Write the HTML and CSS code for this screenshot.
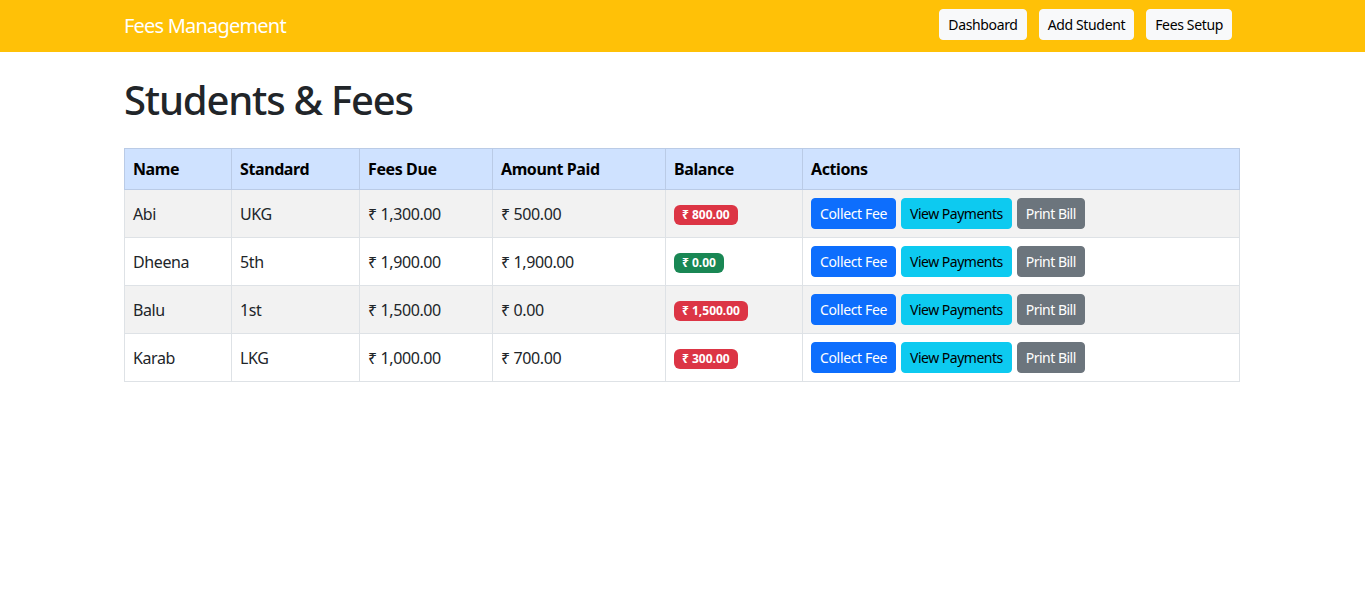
FILE: index.html
```html
<!DOCTYPE html>
<html lang="en">
<head>
<meta charset="utf-8">
<title>Fees Management</title>
<link rel="stylesheet" href="styles.css">
</head>
<body>
<nav class="navbar">
  <div class="nav-inner">
    <a class="brand" href="#">Fees Management</a>
    <div class="nav-links">
      <a class="btn btn-light" href="#">Dashboard</a>
      <a class="btn btn-light" href="#">Add Student</a>
      <a class="btn btn-light" href="#">Fees Setup</a>
    </div>
  </div>
</nav>
<main class="container">
  <h1 class="title">Students &amp; Fees</h1>
  <table class="table">
    <colgroup>
      <col class="c-name"><col class="c-std"><col class="c-due"><col class="c-paid"><col class="c-bal"><col class="c-act">
    </colgroup>
    <thead>
      <tr><th>Name</th><th>Standard</th><th>Fees Due</th><th>Amount Paid</th><th>Balance</th><th>Actions</th></tr>
    </thead>
    <tbody>
      <tr>
        <td>Abi</td><td>UKG</td><td>₹ 1,300.00</td><td>₹ 500.00</td>
        <td><span class="badge danger">₹ 800.00</span></td>
        <td><div class="actions"><a class="btn btn-primary" href="#">Collect Fee</a><a class="btn btn-info" href="#">View Payments</a><a class="btn btn-secondary" href="#">Print Bill</a></div></td>
      </tr>
      <tr>
        <td>Dheena</td><td>5th</td><td>₹ 1,900.00</td><td>₹ 1,900.00</td>
        <td><span class="badge success">₹ 0.00</span></td>
        <td><div class="actions"><a class="btn btn-primary" href="#">Collect Fee</a><a class="btn btn-info" href="#">View Payments</a><a class="btn btn-secondary" href="#">Print Bill</a></div></td>
      </tr>
      <tr>
        <td>Balu</td><td>1st</td><td>₹ 1,500.00</td><td>₹ 0.00</td>
        <td><span class="badge danger">₹ 1,500.00</span></td>
        <td><div class="actions"><a class="btn btn-primary" href="#">Collect Fee</a><a class="btn btn-info" href="#">View Payments</a><a class="btn btn-secondary" href="#">Print Bill</a></div></td>
      </tr>
      <tr>
        <td>Karab</td><td>LKG</td><td>₹ 1,000.00</td><td>₹ 700.00</td>
        <td><span class="badge danger">₹ 300.00</span></td>
        <td><div class="actions"><a class="btn btn-primary" href="#">Collect Fee</a><a class="btn btn-info" href="#">View Payments</a><a class="btn btn-secondary" href="#">Print Bill</a></div></td>
      </tr>
    </tbody>
  </table>
</main>
</body>
</html>
```
FILE: styles.css
```css
* { box-sizing: border-box; }
html, body { margin: 0; padding: 0; }
body {
  font-family: "Noto Sans", "Open Sans", sans-serif;
  font-size: 16px;
  line-height: 1.5;
  color: #212529;
  background: #fff;
}
a { text-decoration: none; }

.navbar {
  background: #ffc107;
  height: 52px;
}
.nav-inner {
  width: 1140px;
  margin: 0 auto;
  padding: 0 12.5px 0 11.5px;
  height: 100%;
  display: flex;
  align-items: center;
  justify-content: space-between;
}
.brand {
  color: #fff;
  font-size: 20px;
  line-height: 30px;
  letter-spacing: -0.8px;
  margin-top: -1px;
}
.nav-links {
  display: flex;
  gap: 12px;
  margin-right: 8px;
  margin-top: -3px;
}

.btn {
  display: inline-block;
  font-size: 14px;
  line-height: 21px;
  padding: 4px 8px;
  border: 1px solid transparent;
  border-radius: 4px;
  white-space: nowrap;
  letter-spacing: -0.5px;
}
.btn-light { background: #f8f9fa; border-color: #f8f9fa; color: #000; letter-spacing: -0.35px; }
.btn-primary { background: #0d6efd; border-color: #0d6efd; color: #fff; letter-spacing: -0.35px; }
.btn-info { background: #0dcaf0; border-color: #0dcaf0; color: #000; }
.btn-secondary { background: #6c757d; border-color: #6c757d; color: #fff; }

.container {
  width: 1140px;
  margin: 0 auto;
  padding: 24px 12.5px 0 11.5px;
}
.title {
  margin: 0 0 24px;
  font-size: 40px;
  line-height: 48px;
  font-weight: 500;
  letter-spacing: -1.2px;
}

.table {
  width: 100%;
  border-collapse: collapse;
  table-layout: fixed;
}
.c-name { width: 107px; }
.c-std { width: 128px; }
.c-due { width: 133px; }
.c-paid { width: 173px; }
.c-bal { width: 137px; }
.c-act { width: auto; }

.table th, .table td {
  padding: 8px;
  text-align: left;
  vertical-align: middle;
  border: 1px solid #dee2e6;
  letter-spacing: -0.4px;
}
.table thead th {
  background: #cfe2ff;
  color: #000;
  font-weight: 700;
  border-color: #bacbe6;
  line-height: 24px;
}
.table tbody td { height: 48px; }
.table tbody tr:nth-child(odd) td { background: #f2f2f2; }

.badge {
  display: inline-block;
  font-size: 12px;
  font-weight: 700;
  line-height: 12px;
  color: #fff;
  padding: 4px 8px;
  border-radius: 6px;
  letter-spacing: 0;
  vertical-align: middle;
}
.badge.danger { background: #dc3545; }
.badge.success { background: #198754; }

.actions {
  display: flex;
  gap: 5px;
}
```
